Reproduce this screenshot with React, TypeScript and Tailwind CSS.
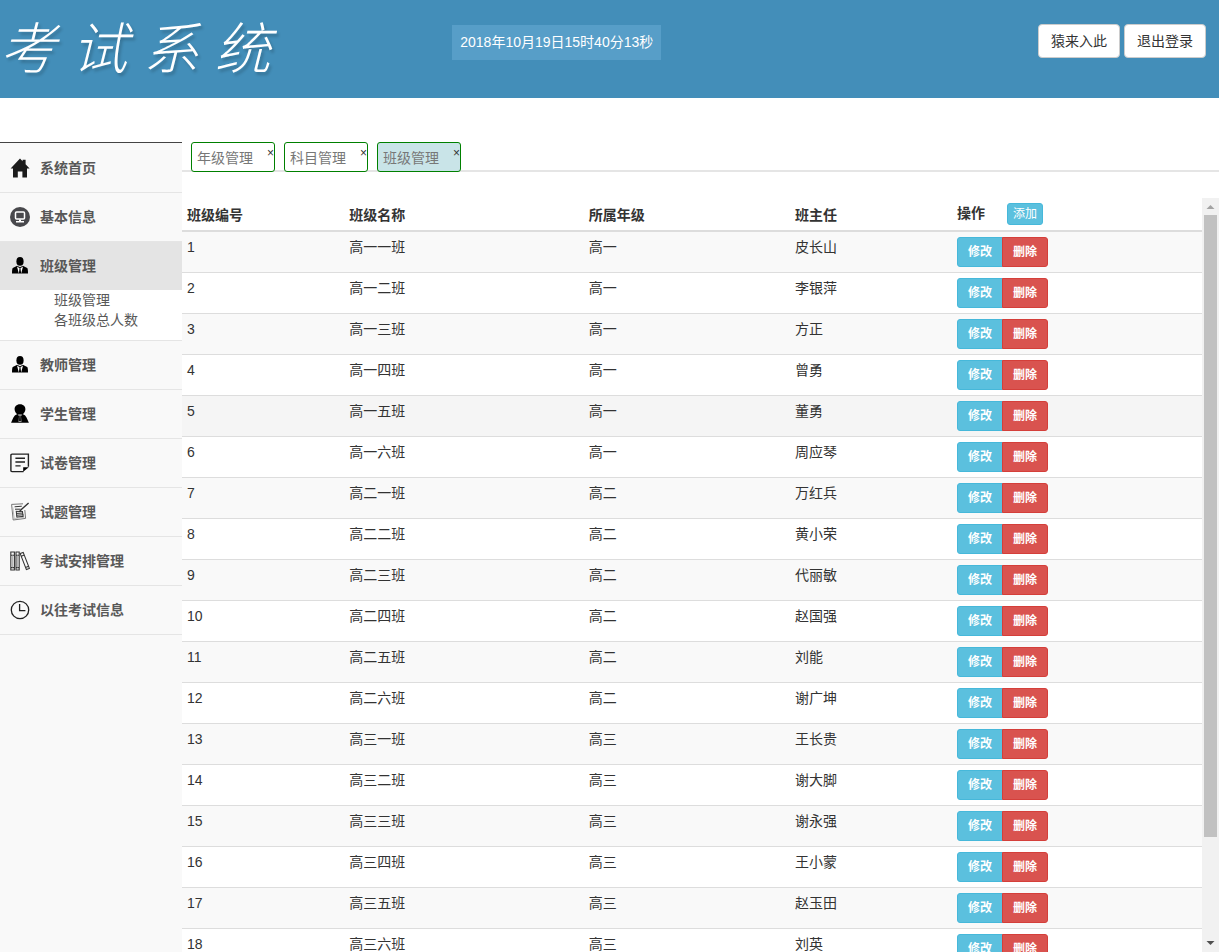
import type { ReactNode } from 'react';

interface ClassRow {
  name: string;
  grade: string;
  teacher: string;
}

interface MenuItem {
  label: string;
  icon: ReactNode;
  children?: string[];
}

const rows: ClassRow[] = [
  { name: '高一一班', grade: '高一', teacher: '皮长山' },
  { name: '高一二班', grade: '高一', teacher: '李银萍' },
  { name: '高一三班', grade: '高一', teacher: '方正' },
  { name: '高一四班', grade: '高一', teacher: '曾勇' },
  { name: '高一五班', grade: '高一', teacher: '董勇' },
  { name: '高一六班', grade: '高一', teacher: '周应琴' },
  { name: '高二一班', grade: '高二', teacher: '万红兵' },
  { name: '高二二班', grade: '高二', teacher: '黄小荣' },
  { name: '高二三班', grade: '高二', teacher: '代丽敏' },
  { name: '高二四班', grade: '高二', teacher: '赵国强' },
  { name: '高二五班', grade: '高二', teacher: '刘能' },
  { name: '高二六班', grade: '高二', teacher: '谢广坤' },
  { name: '高三一班', grade: '高三', teacher: '王长贵' },
  { name: '高三二班', grade: '高三', teacher: '谢大脚' },
  { name: '高三三班', grade: '高三', teacher: '谢永强' },
  { name: '高三四班', grade: '高三', teacher: '王小蒙' },
  { name: '高三五班', grade: '高三', teacher: '赵玉田' },
  { name: '高三六班', grade: '高三', teacher: '刘英' },
];

const tabs = ['年级管理', '科目管理', '班级管理'];
const activeTab = '班级管理';
const activeRow = '高一五班';

const HomeIcon = () => (
  <svg viewBox="0 0 20 20" className="size-5" fill="#1c1c1c">
    <path d="M10 .5 L12.6 3.2 V1.8 H15.6 V6.2 L19.6 10.6 H17 V19.6 H12.4 V13.4 H7.8 V19.6 H3 V10.6 H.6 Z" />
  </svg>
);

const MonitorIcon = () => (
  <svg viewBox="0 0 20 20" className="size-5">
    <circle cx="10" cy="10" r="10" fill="#48484c" />
    <rect x="5.5" y="5" width="9" height="7" rx="1" fill="none" stroke="#fff" strokeWidth="1.5" />
    <path d="M9 12.5h2v1.5h3v1.4H6V14h3z" fill="#fff" />
  </svg>
);

const ManagerIcon = () => (
  <svg viewBox="0 0 20 20" className="size-5" fill="#000">
    <ellipse cx="10" cy="5.4" rx="3.6" ry="4.3" />
    <path d="M7.2 9.8 L2.8 12 Q2 12.6 2 17.6 H18 Q18 12.6 17.2 12 L12.8 9.8 L10 11.2 Z" />
    <path d="M7 10.4 L8.8 17.6 L9.6 12.2 Z M13 10.4 L11.2 17.6 L10.4 12.2 Z" fill="#fff" />
  </svg>
);

const StudentIcon = () => (
  <svg viewBox="0 0 20 20" className="size-5" fill="#000">
    <path d="M10 .2 C13.6 .2 15.4 2.6 15.4 5.2 C15.4 7.4 14 9.4 12.6 10.2 C15.4 10.8 16.4 12.6 18.9 18.8 H1.1 C3.6 12.6 4.6 10.8 7.4 10.2 C6 9.4 4.6 7.4 4.6 5.2 C4.6 2.6 6.4 .2 10 .2 Z" />
    <path d="M8 10.6 H12 L11 12.2 L11.4 18 H8.6 L9 12.2 Z" fill="#ddd" />
    <path d="M9.3 11.6 H10.7 L10.9 16.4 L10 18 L9.1 16.4 Z" />
  </svg>
);

const PaperIcon = () => (
  <svg viewBox="0 0 20 20" className="size-5" fill="none" stroke="#222" strokeWidth="1.4">
    <path d="M13.5 18.6 H2 Q.9 18.6 .9 17.5 V2.2 Q.9 1.1 2 1.1 H18.4 V13.8" />
    <path d="M5.4 5.2 H15 M5.4 9 H15 M5.4 12.9 H10.6" />
    <path d="M13.2 18.8 V14.2 H18.8 Z" fill="#000" stroke="none" />
  </svg>
);

const QuestionIcon = () => (
  <svg viewBox="0 0 20 20" className="size-5" fill="none" stroke="#333" strokeWidth="1">
    <path d="M13 1.8 L1.6 2.4 L3.2 18 L15.6 16.4 L14.8 8" stroke="#777" />
    <path d="M2.8 5.4 L4.2 16.6 L14.4 15.2" stroke="#bbb" />
    <path d="M4.6 4.8 L11.8 4.2 M5 7.2 H10.6 M6.2 9.4 H12 M6.6 11.4 L13 11 M6.6 13.2 L13.4 12.8 M6.8 15 L13.2 14.4 M6.2 8.8 L6.9 15.4 M12.4 9 L13.2 14.8" />
    <path d="M18.6 1 L11.6 7.2 L9.4 9.6" strokeWidth="1.4" />
  </svg>
);

const BooksIcon = () => (
  <svg viewBox="0 0 20 20" className="size-5" fill="none" stroke="#333" strokeWidth="1.1">
    <path d="M.8 1 H4.4 V19 H.8 Z M6 1 H9.2 V19 H6 Z M.8 4.2 H4.4 M.8 16.6 H4.4 M6 4.2 H9.2 M6 16.6 H9.2" />
    <path d="M2.6 4.2 V16.6 M7.6 4.2 V16.6" stroke="#999" strokeWidth=".8" />
    <path d="M10.2 2.6 L13.2 1.4 L19.4 17.4 L16.4 18.6 Z M11.3 5.2 L14.3 4 M15.6 16.4 L18.6 15.2" />
  </svg>
);

const ClockIcon = () => (
  <svg viewBox="0 0 20 20" className="size-5" fill="none" stroke="#222" strokeWidth="1.3">
    <circle cx="10" cy="10" r="8.7" />
    <path d="M9.6 4 V10.6 H15.4" />
  </svg>
);

const menu: MenuItem[] = [
  { label: '系统首页', icon: <HomeIcon /> },
  { label: '基本信息', icon: <MonitorIcon /> },
  { label: '班级管理', icon: <ManagerIcon />, children: ['班级管理', '各班级总人数'] },
  { label: '教师管理', icon: <ManagerIcon /> },
  { label: '学生管理', icon: <StudentIcon /> },
  { label: '试卷管理', icon: <PaperIcon /> },
  { label: '试题管理', icon: <QuestionIcon /> },
  { label: '考试安排管理', icon: <BooksIcon /> },
  { label: '以往考试信息', icon: <ClockIcon /> },
];

function Header() {
  const button = 'h-[34px] rounded border border-[#ccc] bg-white px-3 text-[#333]';

  return (
    <header className="flex h-[98px] shrink-0 items-start bg-[#438eb9] pr-[13px] text-white">
      <h1 className="w-[37.5%] shrink-0 pt-2 text-[56px] leading-[84px] font-light whitespace-nowrap italic text-shadow-[2px_3px_3px_rgb(0_0_0/0.2)]">
        考 试 系 统
      </h1>
      <time className="mt-[25px] bg-[#579ec8] px-2 leading-[35px] whitespace-nowrap">
        2018年10月19日15时40分13秒
      </time>
      <div className="mt-6 ml-auto flex gap-1">
        <button type="button" className={button}>猿来入此</button>
        <button type="button" className={button}>退出登录</button>
      </div>
    </header>
  );
}

function Sidebar() {
  return (
    <nav className="w-[182px] shrink-0 border-t border-[#444] bg-[#f9f9f9] text-[#585858]">
      <ul className="border-b border-[#e5e5e5]">
        {menu.map((item, i) => (
          <li key={item.label}>
            <a
              href="#"
              className={`flex h-[49px] items-center gap-2.5 border-t pl-2.5 font-bold ${
                i === 0 ? 'border-[#f9f9f9]' : 'border-[#e5e5e5]'
              } ${item.children ? 'bg-[#e4e4e4]' : ''}`}
            >
              {item.icon}
              {item.label}
            </a>
            {item.children && (
              <ul className="bg-white pb-2.5 pl-[54px]">
                {item.children.map((child) => (
                  <li key={child}>
                    <a href="#">{child}</a>
                  </li>
                ))}
              </ul>
            )}
          </li>
        ))}
      </ul>
    </nav>
  );
}

function TabBar() {
  return (
    <div className="flex shrink-0 gap-[9px] border-b-2 border-[#e5e5e5] pl-[9px]">
      {tabs.map((tab) => (
        <div
          key={tab}
          className={`-mb-0.5 flex h-[30px] w-[84px] items-start justify-between rounded-[3px] border border-[green] pl-[5px] ${
            tab === activeTab ? 'bg-[#c9e4e8]' : 'bg-white'
          }`}
        >
          <a href="#" className="leading-[30px] text-[#777]">{tab}</a>
          <button type="button" aria-label={`关闭${tab}`} className="text-xs leading-5 text-[#333]">×</button>
        </div>
      ))}
    </div>
  );
}

function ClassTable() {
  return (
    <table className="w-full table-fixed border-separate border-spacing-0 self-start text-left text-[#333]">
      <thead>
        <tr className="align-bottom *:border-b-2 *:border-[#ddd] *:p-[5px] *:font-bold">
          <th className="w-[15.9%]">班级编号</th>
          <th className="w-[23.5%]">班级名称</th>
          <th className="w-[20.2%]">所属年级</th>
          <th className="w-[15.9%]">班主任</th>
          <th>
            <div className="flex h-[22px] items-start gap-[22px]">
              操作
              <button
                type="button"
                className="h-[22px] rounded-[3px] border border-[#46b8da] bg-[#5bc0de] px-[5px] text-xs font-normal text-white"
              >
                添加
              </button>
            </div>
          </th>
        </tr>
      </thead>
      <tbody>
        {rows.map((row, i) => (
          <tr
            key={row.name}
            className={`align-top hover:bg-[#f5f5f5] *:border-b *:border-[#ddd] *:p-[5px] ${
              row.name === activeRow ? 'bg-[#f5f5f5]' : 'odd:bg-[#f9f9f9]'
            }`}
          >
            <td>{i + 1}</td>
            <td>{row.name}</td>
            <td>{row.grade}</td>
            <td>{row.teacher}</td>
            <td>
              <div className="flex text-xs font-bold text-white">
                <button type="button" className="h-[30px] rounded-l-[3px] border border-[#46b8da] bg-[#5bc0de] px-2.5">
                  修改
                </button>
                <button type="button" className="-ml-px h-[30px] rounded-r-[3px] border border-[#d43f3a] bg-[#d9534f] px-2.5">
                  删除
                </button>
              </div>
            </td>
          </tr>
        ))}
      </tbody>
    </table>
  );
}

function ScrollBar() {
  return (
    <div className="flex w-[17px] shrink-0 flex-col items-center bg-[#f1f1f1]">
      <svg viewBox="0 0 17 17" className="size-[17px] shrink-0">
        <path d="M4.5 11 L8.5 7 L12.5 11 Z" fill="#a3a3a3" />
      </svg>
      <div className="flex min-h-0 w-full flex-1 justify-center">
        <div className="h-[86.4%] w-[13px] bg-[#c1c1c1]" />
      </div>
      <svg viewBox="0 0 17 17" className="size-[17px] shrink-0">
        <path d="M4.5 6 L8.5 10 L12.5 6 Z" fill="#505050" />
      </svg>
    </div>
  );
}

export default function App() {
  return (
    <div className="flex h-screen flex-col overflow-hidden bg-white font-['Liberation_Sans','Noto_Sans_CJK_SC',sans-serif] text-sm leading-5">
      <Header />
      <div className="flex min-h-0 flex-1 pt-11">
        <Sidebar />
        <main className="flex min-w-0 flex-1 flex-col">
          <TabBar />
          <section className="mt-[26px] flex min-h-0 flex-1 overflow-hidden">
            <ClassTable />
            <ScrollBar />
          </section>
        </main>
      </div>
    </div>
  );
}
